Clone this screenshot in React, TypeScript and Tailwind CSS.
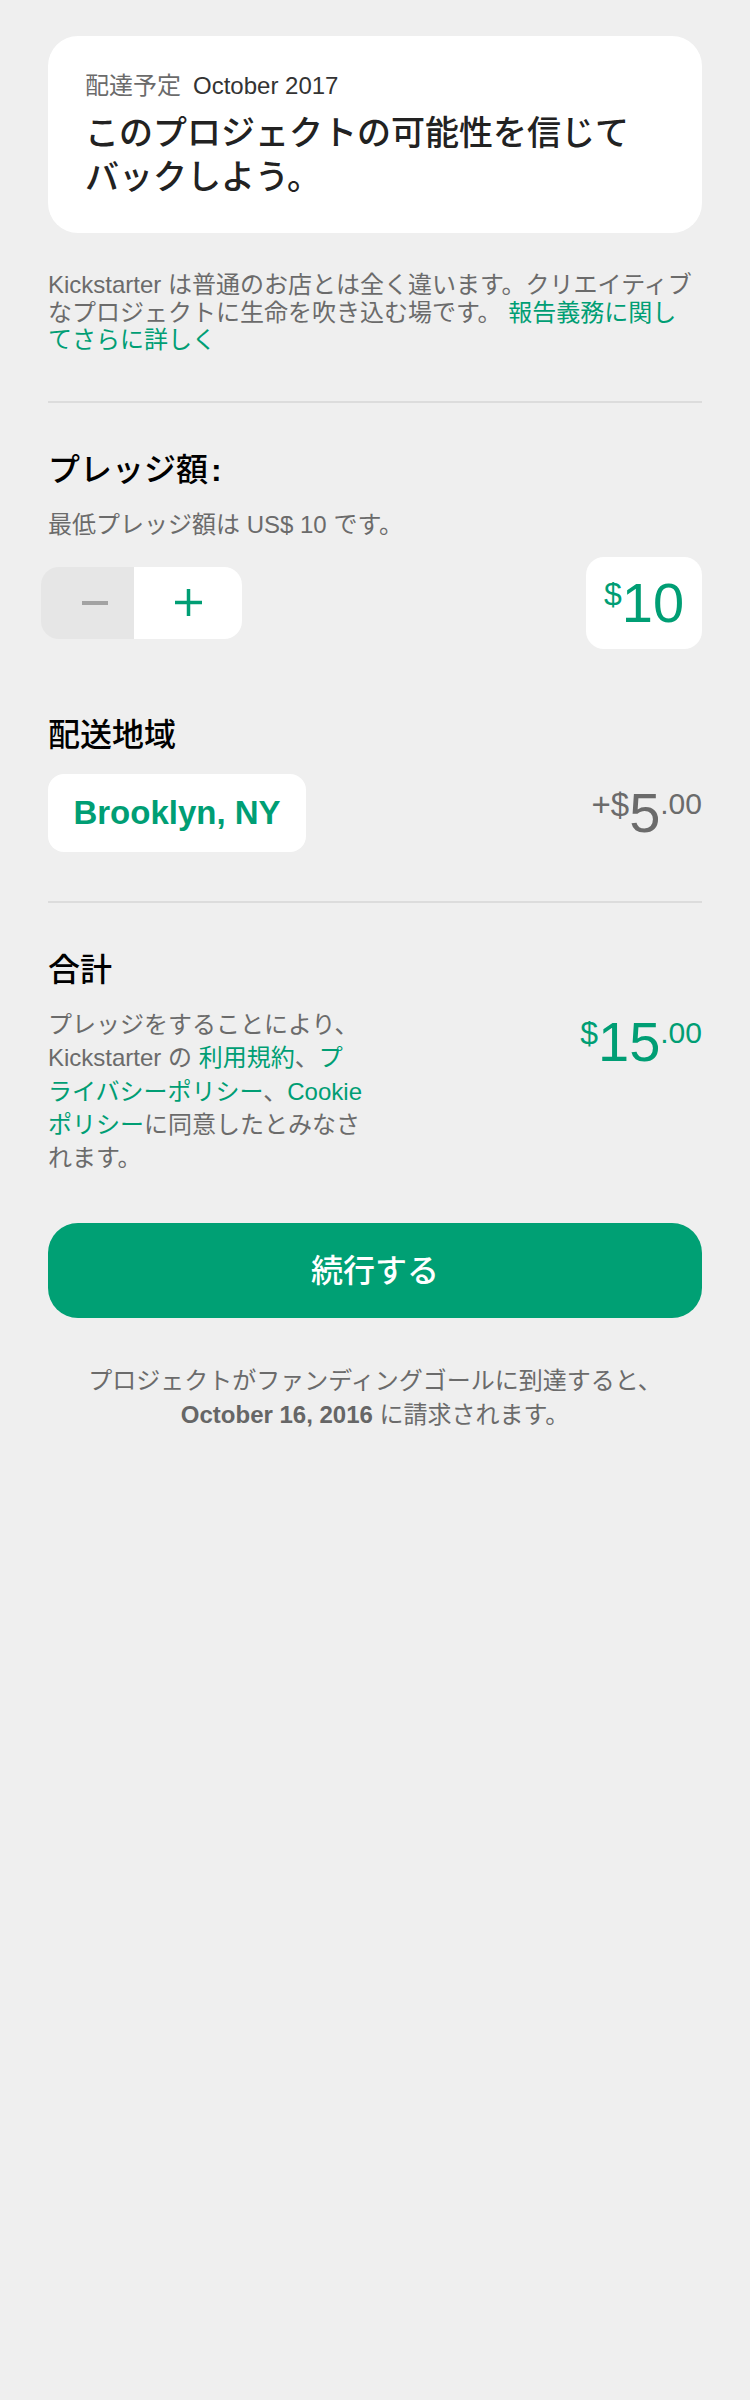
import React from "react";

const green = "text-[#009e74]";

function Price({
  cur,
  main,
  cents,
  color,
}: {
  cur: string;
  main: string;
  cents?: string;
  color: string;
}) {
  return (
    <div className={`flex items-start ${color}`}>
      <span className="mt-[3px] text-[32px] leading-none">{cur}</span>
      <span className="text-[56px] leading-none">{main}</span>
      {cents && <span className="mt-[4px] text-[30px] leading-none">{cents}</span>}
    </div>
  );
}

export default function App() {
  return (
    <div className="min-h-[2400px] w-[750px] bg-[#efefef] px-[48px] pt-[36px] font-['Liberation_Sans','Noto_Sans_CJK_JP',sans-serif]">
      {/* Card */}
      <div className="rounded-[30px] bg-white pb-[34px] pl-[37px] pr-[30px] pt-[36px]">
        <div className="text-[24px] leading-[28px]">
          <span className="text-[#6b6b6b]">配達予定</span>
          <span className="ml-[12px] text-[#333]">October 2017</span>
        </div>
        <div className="mt-[11px] whitespace-nowrap text-[34px] font-medium leading-[44px] text-[#222]">
          このプロジェクトの可能性を信じて
          <br />
          バックしよう。
        </div>
      </div>

      {/* Intro paragraph */}
      <p className="mt-[38px] whitespace-nowrap text-[24px] leading-[27.5px] text-[#6b6b6b]">
        Kickstarter は普通のお店とは全く違います。クリエイティブ
        <br />
        なプロジェクトに生命を吹き込む場です。 <span className={green}>報告義務に関し</span>
        <br />
        <span className={green}>てさらに詳しく</span>
      </p>

      <div className="mt-[47px] h-[2px] bg-[#dcdcdc]" />

      {/* Pledge amount */}
      <h2 className="mt-[47px] text-[32px] font-medium leading-[40px] text-black">
        プレッジ額<span className="ml-[3px] font-bold">:</span>
      </h2>
      <p className="mt-[21px] text-[24px] leading-[28px] text-[#6b6b6b]">最低プレッジ額は US$ 10 です。</p>
      <div className="mt-[18px] flex items-center justify-between">
        <div className="ml-[-7px] flex h-[72px] overflow-hidden rounded-[18px]">
          <div className="flex w-[93px] items-center justify-end bg-[#e6e6e6] pr-[26px]">
            <div className="h-[4px] w-[26px] bg-[#a3a3a3]" />
          </div>
          <div className="flex w-[108px] items-center justify-center bg-white">
            <svg width="27" height="27" viewBox="0 0 27 27">
              <path d="M0 13.5H27M13.5 0V27" stroke="#009e74" strokeWidth="3.5" />
            </svg>
          </div>
        </div>
        <div className="flex h-[92px] w-[116px] items-center justify-center rounded-[18px] bg-white">
          <Price cur="$" main="10" color={green} />
        </div>
      </div>

      {/* Shipping */}
      <h2 className="mt-[66px] text-[32px] font-medium leading-[40px] text-black">配送地域</h2>
      <div className="mt-[19px] flex items-center justify-between">
        <div className="flex h-[78px] w-[258px] items-center justify-center rounded-[16px] bg-white">
          <span className={`text-[33px] font-bold ${green}`}>Brooklyn, NY</span>
        </div>
        <div className="flex items-start text-[#6b6b6b]">
          <span className="mt-[3px] text-[33px] leading-none">+$</span>
          <span className="text-[56px] leading-none">5</span>
          <span className="mt-[4px] text-[30px] leading-none">.00</span>
        </div>
      </div>

      <div className="mt-[49px] h-[2px] bg-[#dcdcdc]" />

      {/* Total */}
      <h2 className="mt-[47px] text-[32px] font-medium leading-[40px] text-black">合計</h2>
      <div className="mt-[18.5px] flex items-start justify-between">
        <p className="whitespace-nowrap text-[24px] leading-[33.3px] text-[#6b6b6b]">
          プレッジをすることにより、
          <br />
          Kickstarter の <span className={green}>利用規約</span>、<span className={green}>プ</span>
          <br />
          <span className={green}>ライバシーポリシー</span>、<span className={green}>Cookie</span>
          <br />
          <span className={green}>ポリシー</span>に同意したとみなさ
          <br />
          れます。
        </p>
        <div className="mt-[6px]">
          <Price cur="$" main="15" cents=".00" color={green} />
        </div>
      </div>

      <button className="mt-[49px] flex h-[95px] w-full items-center justify-center rounded-[30px] bg-[#00a074] text-[32px] font-medium text-white">
        続行する
      </button>

      <p className="mt-[46px] text-center text-[24px] leading-[33.5px] text-[#6b6b6b]">
        プロジェクトがファンディングゴールに到達すると、
        <br />
        <span className="font-bold text-[#666]">October 16, 2016</span> に請求されます。
      </p>
    </div>
  );
}
